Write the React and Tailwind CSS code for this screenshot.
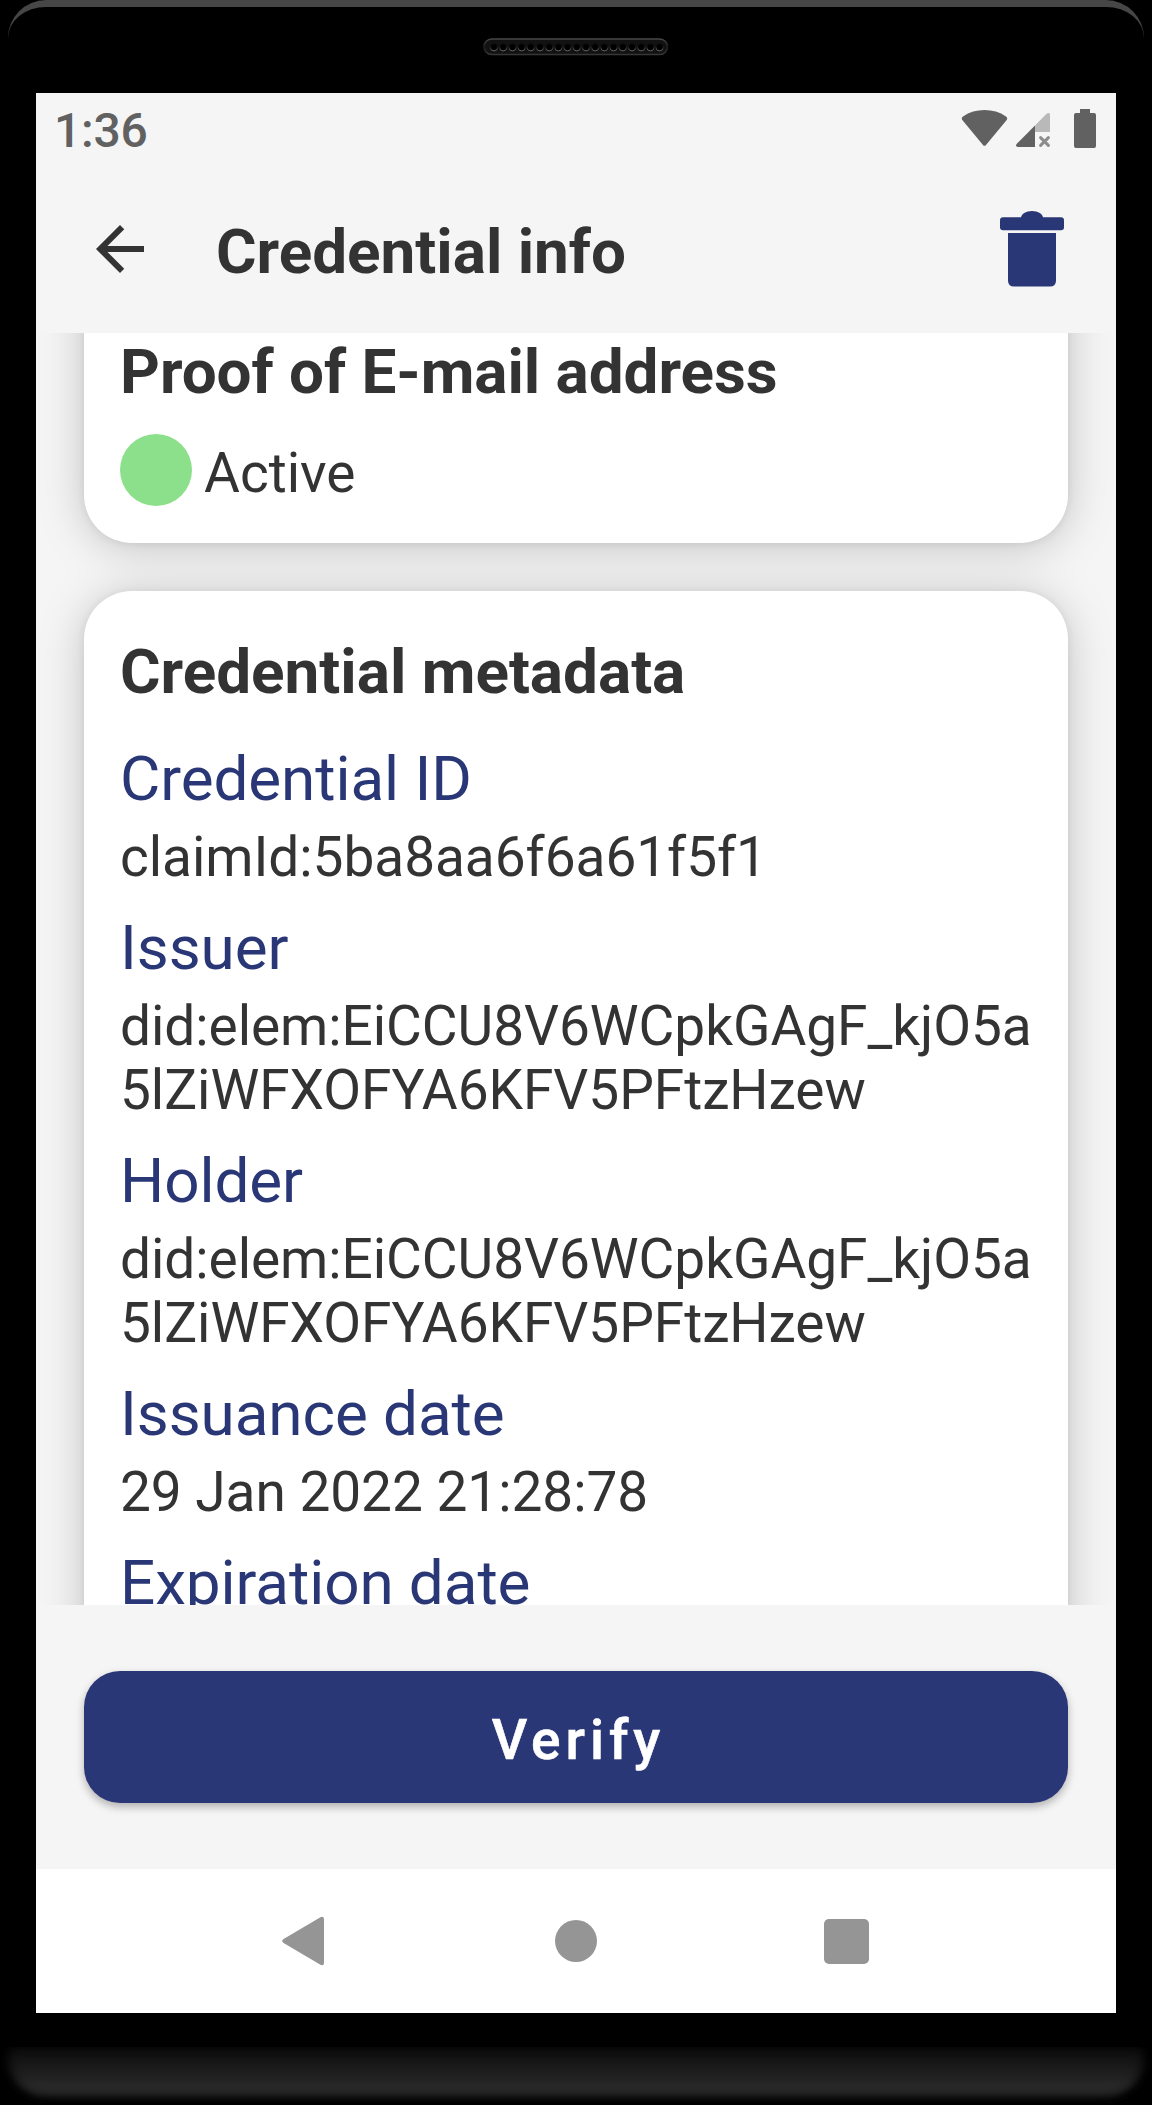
import React from "react";

const metadata = [
  { label: "Credential ID", lines: ["claimId:5ba8aa6f6a61f5f1"] },
  { label: "Issuer", lines: ["did:elem:EiCCU8V6WCpkGAgF_kjO5a", "5lZiWFXOFYA6KFV5PFtzHzew"] },
  { label: "Holder", lines: ["did:elem:EiCCU8V6WCpkGAgF_kjO5a", "5lZiWFXOFYA6KFV5PFtzHzew"] },
  { label: "Issuance date", lines: ["29 Jan 2022 21:28:78"] },
  { label: "Expiration date", lines: [] },
];

const holes = Array.from({ length: 19 }, (_, i) => 11 + i * 9.2);

function Speaker() {
  return (
    <svg width="186" height="18" viewBox="0 0 186 18" fill="none">
      <defs>
        <linearGradient id="rim" x1="0" y1="0" x2="0" y2="1">
          <stop offset="0" stopColor="#484848" />
          <stop offset="0.5" stopColor="#1c1c1c" />
          <stop offset="1" stopColor="#363636" />
        </linearGradient>
        <linearGradient id="hole" x1="0" y1="0" x2="0" y2="1">
          <stop offset="0.3" stopColor="#0c0c0c" />
          <stop offset="1" stopColor="#6a6a6a" />
        </linearGradient>
      </defs>
      <rect x="1" y="1" width="183.5" height="15.5" rx="7.75" fill="#121212" stroke="url(#rim)" strokeWidth="1.6" />
      {holes.map((x) => (
        <circle key={x} cx={x} cy="9.3" r="3.6" fill="#000" stroke="url(#hole)" strokeWidth="1" />
      ))}
    </svg>
  );
}

function StatusIcons() {
  return (
    <svg width="144" height="72" viewBox="0 0 144 72" fill="#616161">
      <path d="M6.3 26.9 Q5 24.7 7 23.4 Q16.5 17 28.5 17 Q40.5 17 50 23.4 Q52 24.7 50.7 26.9 L30 51.9 Q28.5 53.6 27 51.9 Z" />
      <path d="M79 32.5 L90.6 20.8 Q94 18.6 94 22 V39 H79 Z" fill="#b9b9b9" />
      <path d="M79 32.5 V54 H62 Q59 53.4 60.6 51 Z" />
      <path d="M84.6 44.6 L92.4 52.4 M92.4 44.6 L84.6 52.4" stroke="#8c8c8c" strokeWidth="3" strokeLinecap="round" fill="none" />
      <path d="M124 16 H134 V20 H138 Q140 20 140 22 V53 Q140 55 138 55 H120 Q118 55 118 53 V22 Q118 20 120 20 H124 Z" />
    </svg>
  );
}

function BackArrow() {
  return (
    <svg width="72" height="72" viewBox="0 0 24 24" fill="#333333">
      <path d="M20 11H7.83l5.59-5.59L12 4l-8 8 8 8 1.41-1.41L7.83 13H20v-2z" />
    </svg>
  );
}

function Trash() {
  return (
    <svg width="64" height="76" viewBox="0 0 64 76" fill="#2a3776">
      <path d="M21 7 C21 3 26 0 32 0 C38 0 43 3 43 7 Z" />
      <rect x="0" y="6.3" width="64" height="13" rx="3" />
      <path d="M8 22 H56 V69.5 Q56 75.5 50 75.5 H14 Q8 75.5 8 69.5 Z" />
    </svg>
  );
}

export default function App() {
  return (
    <div className="flex h-[2105px] w-[1152px] flex-col overflow-hidden bg-black font-[Roboto,sans-serif] text-[#333333]">
      <div className="mx-2 flex h-[93px] shrink-0 justify-center rounded-t-[38px] border-t-[7px] border-[#464646] pt-[31px]">
        <Speaker />
      </div>

      <div className="mx-9 flex h-[1920px] shrink-0 flex-col bg-[#f5f5f5]">
        <div className="flex h-[72px] shrink-0 justify-between pr-4 pl-[18px]">
          <span className="pt-[9px] text-[48px] leading-[57px] font-medium tracking-[-0.2px] text-[#616161]">1:36</span>
          <StatusIcons />
        </div>

        <header className="flex h-[168px] shrink-0 items-center pr-[52px] pl-12">
          <BackArrow />
          <h1 className="ml-[60px] grow pt-[5px] text-[62px] leading-[73px] font-bold">Credential info</h1>
          <Trash />
        </header>

        <main className="h-[1272px] shrink-0 overflow-hidden">
          <div className="-mt-25 flex flex-col gap-12 px-12 [filter:drop-shadow(0_1px_5px_rgba(0,0,0,0.08))_drop-shadow(0_4px_22px_rgba(0,0,0,0.2))]">
            <section className="h-[310px] rounded-[48px] bg-white px-9 pt-[102px]">
              <h2 className="text-[62px] leading-[73px] font-bold tracking-[-0.05px]">Proof of E-mail address</h2>
              <div className="mt-[26px] flex gap-3">
                <span className="size-[72px] rounded-full bg-[#8ce08c]" />
                <span className="pt-[7px] text-[55px] leading-[64px]">Active</span>
              </div>
            </section>

            <section className="rounded-[48px] bg-white px-9 pt-11 pb-40">
              <h2 className="mb-[34px] text-[62px] leading-[73px] font-bold">Credential metadata</h2>
              <dl className="flex flex-col gap-[22px]">
                {metadata.map(({ label, lines }) => (
                  <div key={label} className="flex flex-col gap-[10px]">
                    <dt className="text-[62px] leading-[73px] tracking-[-0.08px] text-[#2a3776]">{label}</dt>
                    {lines.length > 0 && (
                      <dd className="text-[55px] leading-[64px] tracking-[-0.05px] whitespace-nowrap">
                        {lines.map((line) => (
                          <span key={line} className="block">{line}</span>
                        ))}
                      </dd>
                    )}
                  </div>
                ))}
              </dl>
            </section>
          </div>
        </main>

        <div className="flex h-[264px] shrink-0 items-center px-12">
          <button className="h-[132px] w-full rounded-[36px] bg-[#2a3776] pt-[5px] pl-[5px] text-[55px] leading-[64px] font-medium tracking-[5px] text-white shadow-[0_4px_8px_rgba(0,0,0,0.28)] [-webkit-text-stroke:0.6px_white]">
            Verify
          </button>
        </div>

        <nav className="grid h-36 shrink-0 grid-cols-[270px_270px_270px] place-content-center place-items-center bg-white">
          <svg width="48" height="50" viewBox="0 0 48 50" fill="#959595">
            <path d="M1.6 27 Q-1.4 25 1.6 23 L38.4 1.2 Q42 -0.4 42 3.4 V46.6 Q42 50.4 38.4 48.8 Z" />
          </svg>
          <span className="size-[42px] rounded-full bg-[#959595]" />
          <span className="size-[45px] rounded-[5px] bg-[#959595]" />
        </nav>
      </div>

      <div className="mx-0.5 mt-[34px] h-14 shrink-0 rounded-b-[44px] bg-linear-to-b from-[#0c0c0c] to-[#282828] to-70% shadow-[inset_0_-8px_8px_-2px_#000,inset_10px_0_12px_-4px_#000,inset_-10px_0_12px_-4px_#000]" />
    </div>
  );
}
